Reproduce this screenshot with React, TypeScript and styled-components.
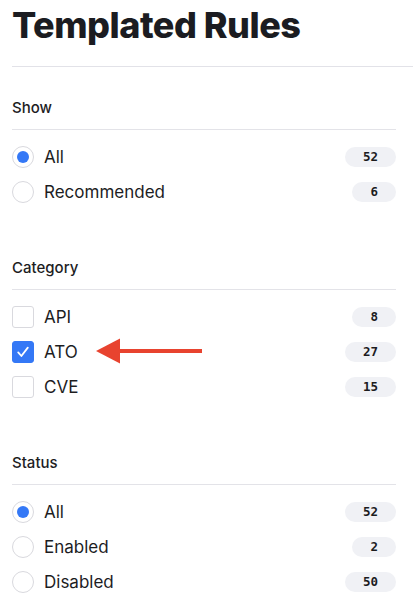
import * as React from 'react';
import styled, { createGlobalStyle } from 'styled-components';

const GlobalStyle = createGlobalStyle`
	html, body {
		margin: 0;
		padding: 0;
		background: #ffffff;
	}
	body {
		font-family: Inter, 'Noto Sans', 'Liberation Sans', sans-serif;
		color: #1d1d1f;
		-webkit-font-smoothing: antialiased;
	}
`;

const Page = styled.div`
	width: 413px;
	padding-left: 12px;
	box-sizing: border-box;
`;

const Title = styled.h1`
	margin: 0;
	padding-top: 4px;
	font-size: 36px;
	line-height: 43px;
	font-weight: 800;
	letter-spacing: -0.5px;
	color: #1b1c21;
	border-bottom: 1px solid #e2e2e8;
	padding-bottom: 19px;
`;

const Sections = styled.div`
	padding-right: 17px;
	padding-top: 31px;
	display: flex;
	flex-direction: column;
	gap: 49px;
`;

const Section = styled.section`
	display: flex;
	flex-direction: column;
`;

const SectionTitle = styled.div`
	font-size: 15px;
	line-height: 20px;
	font-weight: 500;
	color: #1d1d1f;
	padding-bottom: 11px;
	border-bottom: 1px solid #e3e3e8;
`;

const List = styled.div`
	padding-top: 9px;
	display: flex;
	flex-direction: column;
`;

const Row = styled.label`
	position: relative;
	height: 35px;
	display: flex;
	align-items: center;
	gap: 10px;
`;

const Radio = styled.span<{ $checked?: boolean }>`
	width: 22px;
	height: 22px;
	box-sizing: border-box;
	border-radius: 50%;
	border: 1px solid #d9d9de;
	display: flex;
	align-items: center;
	justify-content: center;
	flex-shrink: 0;

	&::after {
		content: '';
		width: 12px;
		height: 12px;
		border-radius: 50%;
		background: #3478f6;
		display: ${(p) => (p.$checked ? 'block' : 'none')};
	}
`;

const Box = styled.span<{ $checked?: boolean }>`
	width: 22px;
	height: 22px;
	box-sizing: border-box;
	border-radius: 3px;
	border: 1px solid ${(p) => (p.$checked ? '#3478f6' : '#d9d9de')};
	background: ${(p) => (p.$checked ? '#3478f6' : '#ffffff')};
	display: flex;
	align-items: center;
	justify-content: center;
	flex-shrink: 0;
`;

const Label = styled.span`
	flex: 1;
	font-size: 17px;
	line-height: 22px;
	color: #1d1d1f;
`;

const Count = styled.span`
	height: 20px;
	padding: 0 18px;
	border-radius: 10px;
	background: #f0f1f5;
	font-family: 'DejaVu Sans Mono', 'Liberation Mono', monospace;
	font-weight: 700;
	font-size: 12.5px;
	line-height: 20px;
	color: #1c1c1e;
`;

const Arrow = styled.svg`
	position: absolute;
	left: 84px;
	top: 4px;
`;

const Check = () => (
	<svg width="14" height="14" viewBox="0 0 14 14" fill="none">
		<path d="M2.2 7.4 L5.4 11 L11.8 2.6" stroke="#ffffff" strokeWidth="1.8" strokeLinecap="round" strokeLinejoin="round" />
	</svg>
);

type Option = { label: string; count: number; checked?: boolean; pointer?: boolean };

const RadioGroup = ({ title, options }: { title: string; options: Option[] }) => (
	<Section>
		<SectionTitle>{title}</SectionTitle>
		<List>
			{options.map((o) => (
				<Row key={o.label}>
					<Radio $checked={o.checked} />
					<Label>{o.label}</Label>
					<Count>{o.count}</Count>
				</Row>
			))}
		</List>
	</Section>
);

const CheckGroup = ({ title, options }: { title: string; options: Option[] }) => (
	<Section>
		<SectionTitle>{title}</SectionTitle>
		<List>
			{options.map((o) => (
				<Row key={o.label}>
					<Box $checked={o.checked}>{o.checked && <Check />}</Box>
					<Label>{o.label}</Label>
					<Count>{o.count}</Count>
					{o.pointer && (
						// annotation arrow pointing at the checked item
						<Arrow width="108" height="26" viewBox="0 0 108 26">
							<rect x="22" y="11" width="84" height="4" fill="#e8432f" />
							<polygon points="0,13 24,0.5 24,25.5" fill="#e8432f" />
						</Arrow>
					)}
				</Row>
			))}
		</List>
	</Section>
);

export default function App() {
	return (
		<>
			<GlobalStyle />
			<Page>
				<Title>Templated Rules</Title>
				<Sections>
					<RadioGroup
						title="Show"
						options={[
							{ label: 'All', count: 52, checked: true },
							{ label: 'Recommended', count: 6 },
						]}
					/>
					<CheckGroup
						title="Category"
						options={[
							{ label: 'API', count: 8 },
							{ label: 'ATO', count: 27, checked: true, pointer: true },
							{ label: 'CVE', count: 15 },
						]}
					/>
					<RadioGroup
						title="Status"
						options={[
							{ label: 'All', count: 52, checked: true },
							{ label: 'Enabled', count: 2 },
							{ label: 'Disabled', count: 50 },
						]}
					/>
				</Sections>
			</Page>
		</>
	);
}
